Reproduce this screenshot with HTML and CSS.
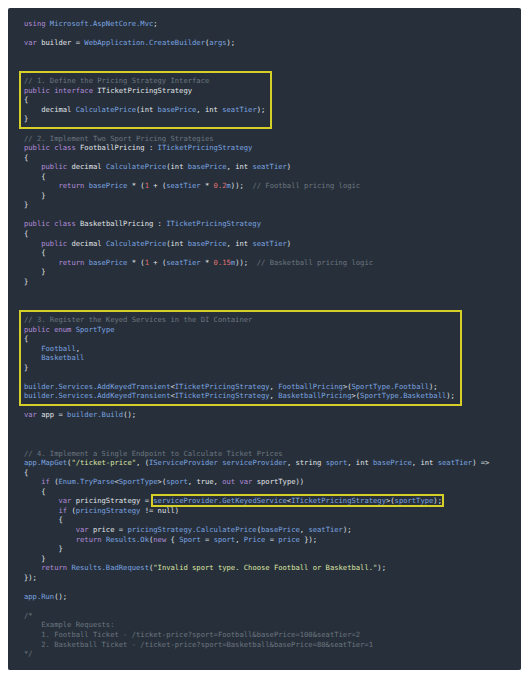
FILE: index.html
```html
<!DOCTYPE html>
<html lang="en">
<head>
<meta charset="utf-8">
<title>Keyed services - ticket pricing</title>
<link rel="stylesheet" href="styles.css">
</head>
<body>
<div class="panel">
  <div class="ln"><span class="k">using</span> <span class="t">Microsoft.AspNetCore.Mvc</span>;</div>
  <div class="ln"></div>
  <div class="ln"><span class="k">var</span> builder = <span class="t">WebApplication.CreateBuilder</span>(<span class="t">args</span>);</div>
  <div class="ln"></div>
  <div class="ln"></div>
  <div class="ln"></div>
  <div class="hl">
    <div class="ln"><span class="c">// 1. Define the Pricing Strategy Interface</span></div>
    <div class="ln"><span class="k">public</span> <span class="k">interface</span> ITicketPricingStrategy</div>
    <div class="ln">{</div>
    <div class="ln">    decimal <span class="t">CalculatePrice</span>(int <span class="t">basePrice</span>, int <span class="t">seatTier</span>);</div>
    <div class="ln">}</div>
  </div>
  <div class="ln"></div>
  <div class="ln"><span class="c">// 2. Implement Two Sport Pricing Strategies</span></div>
  <div class="ln"><span class="k">public</span> <span class="k">class</span> FootballPricing : <span class="t">ITicketPricingStrategy</span></div>
  <div class="ln">{</div>
  <div class="ln">    <span class="k">public</span> decimal <span class="t">CalculatePrice</span>(int <span class="t">basePrice</span>, int <span class="t">seatTier</span>)</div>
  <div class="ln">    {</div>
  <div class="ln">        <span class="k">return</span> <span class="t">basePrice</span> * (<span class="n">1</span> + (<span class="t">seatTier</span> * <span class="n">0.2</span><span class="t">m</span>));  <span class="c">// Football pricing logic</span></div>
  <div class="ln">    }</div>
  <div class="ln">}</div>
  <div class="ln"></div>
  <div class="ln"><span class="k">public</span> <span class="k">class</span> BasketballPricing : <span class="t">ITicketPricingStrategy</span></div>
  <div class="ln">{</div>
  <div class="ln">    <span class="k">public</span> decimal <span class="t">CalculatePrice</span>(int <span class="t">basePrice</span>, int <span class="t">seatTier</span>)</div>
  <div class="ln">    {</div>
  <div class="ln">        <span class="k">return</span> <span class="t">basePrice</span> * (<span class="n">1</span> + (<span class="t">seatTier</span> * <span class="n">0.15</span><span class="t">m</span>));  <span class="c">// Basketball pricing logic</span></div>
  <div class="ln">    }</div>
  <div class="ln">}</div>
  <div class="ln"></div>
  <div class="ln"></div>
  <div class="ln"></div>
  <div class="hl">
    <div class="ln"><span class="c">// 3. Register the Keyed Services in the DI Container</span></div>
    <div class="ln"><span class="k">public</span> <span class="k">enum</span> <span class="t">SportType</span></div>
    <div class="ln">{</div>
    <div class="ln">    <span class="t">Football</span>,</div>
    <div class="ln">    <span class="t">Basketball</span></div>
    <div class="ln">}</div>
    <div class="ln"></div>
    <div class="ln"><span class="t">builder.Services.AddKeyedTransient</span>&lt;<span class="t">ITicketPricingStrategy</span>, <span class="t">FootballPricing</span>&gt;(<span class="t">SportType.Football</span>);</div>
    <div class="ln"><span class="t">builder.Services.AddKeyedTransient</span>&lt;<span class="t">ITicketPricingStrategy</span>, <span class="t">BasketballPricing</span>&gt;(<span class="t">SportType.Basketball</span>);</div>
  </div>
  <div class="ln"></div>
  <div class="ln"><span class="k">var</span> app = <span class="t">builder.Build</span>();</div>
  <div class="ln"></div>
  <div class="ln"></div>
  <div class="ln"></div>
  <div class="ln"><span class="c">// 4. Implement a Single Endpoint to Calculate Ticket Prices</span></div>
  <div class="ln"><span class="t">app.MapGet</span>(<span class="s">"/ticket-price"</span>, (<span class="t">IServiceProvider</span> <span class="t">serviceProvider</span>, string <span class="t">sport</span>, int <span class="t">basePrice</span>, int <span class="t">seatTier</span>) =&gt;</div>
  <div class="ln">{</div>
  <div class="ln">    <span class="k">if</span> (<span class="t">Enum.TryParse</span>&lt;<span class="t">SportType</span>&gt;(<span class="t">sport</span>, true, <span class="k">out</span> <span class="k">var</span> sportType))</div>
  <div class="ln">    {</div>
  <div class="ln">        <span class="k">var</span> pricingStrategy = <span class="hl-inline"><span class="t">serviceProvider.GetKeyedService</span>&lt;<span class="t">ITicketPricingStrategy</span>&gt;(<span class="t">sportType</span>);</span></div>
  <div class="ln">        <span class="k">if</span> (<span class="t">pricingStrategy</span> != null)</div>
  <div class="ln">        {</div>
  <div class="ln">            <span class="k">var</span> price = <span class="t">pricingStrategy.CalculatePrice</span>(<span class="t">basePrice</span>, <span class="t">seatTier</span>);</div>
  <div class="ln">            <span class="k">return</span> <span class="t">Results.Ok</span>(<span class="k">new</span> { <span class="t">Sport</span> = <span class="t">sport</span>, <span class="t">Price</span> = <span class="t">price</span> });</div>
  <div class="ln">        }</div>
  <div class="ln">    }</div>
  <div class="ln">    <span class="k">return</span> <span class="t">Results.BadRequest</span>(<span class="s">"Invalid sport type. Choose Football or Basketball."</span>);</div>
  <div class="ln">});</div>
  <div class="ln"></div>
  <div class="ln"><span class="t">app.Run</span>();</div>
  <div class="ln"></div>
  <div class="ln c">/*</div>
  <div class="ln c">    Example Requests:</div>
  <div class="ln c">    1. Football Ticket - /ticket-price?sport=Football&amp;basePrice=100&amp;seatTier=2</div>
  <div class="ln c">    2. Basketball Ticket - /ticket-price?sport=Basketball&amp;basePrice=80&amp;seatTier=1</div>
  <div class="ln c">*/</div>
</div>
</body>
</html>
```
FILE: styles.css
```css
html, body {
  background: #ffffff;
}

body {
  margin: 8px;
}

.panel {
  background: #27303a;
  padding: 11px 16px 11px 16px;
  border-radius: 2px;
  box-shadow: 0 1px 2px rgba(0, 0, 0, 0.35);
  font-family: "DejaVu Sans Mono", monospace;
  font-size: 7.16px;
  line-height: 9.56px;
  color: #e0e3e8;
}

.ln {
  white-space: pre;
  height: 9.56px;
}

.hl {
  width: fit-content;
  border: 2px solid #d6cf27;
  margin: -5px 0 -5px -5px;
  padding: 3px 5px 3px 3px;
}

.hl-inline {
  outline: 2px solid #d6cf27;
}

.k { color: #b38bd9; }
.t { color: #7ba3e0; }
.n { color: #e07070; }
.s { color: #dde4a4; }
.c { color: #6c7580; }
```
